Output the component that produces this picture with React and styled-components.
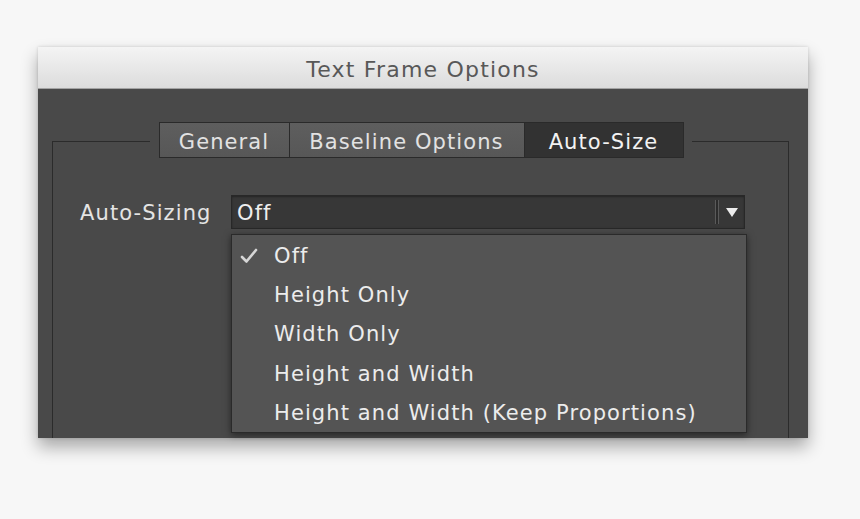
import React from 'react';
import styled, { createGlobalStyle } from 'styled-components';

const GlobalStyle = createGlobalStyle`
  html, body {
    margin: 0;
    padding: 0;
    background: #f7f7f7;
  }
  body {
    font-family: "DejaVu Sans", "Liberation Sans", sans-serif;
  }
`;

const Page = styled.div`
  height: 519px;
  box-sizing: border-box;
  padding: 47px 0 0 38px;
`;

const Window = styled.div`
  width: 770px;
  height: 391px;
  display: flex;
  flex-direction: column;
  box-shadow: 0 9px 16px rgba(0, 0, 0, 0.32), 0 0 3px rgba(0, 0, 0, 0.15);
`;

const TitleBar = styled.div`
  height: 42px;
  box-sizing: border-box;
  padding-top: 3px;
  border-bottom: 1px solid #a3a3a3;
  background: linear-gradient(#f4f4f4, #dcdcdc);
  display: flex;
  align-items: center;
  justify-content: center;
  font-size: 22px;
  letter-spacing: 1.2px;
  color: #585858;
`;

const Body = styled.div`
  flex: 1;
  background: #494949;
  padding: 33px 0 0 14px;
  display: flex;
  flex-direction: column;
  font-size: 21px;
  letter-spacing: 1.1px;
  color: #e8e8e8;
`;

const GroupBox = styled.div`
  width: 737px;
  flex: 1;
  display: flex;
  flex-direction: column;
`;

const Header = styled.div`
  display: flex;
  align-items: flex-start;
  height: 36px;
`;

const Rule = styled.div`
  flex: 1;
  margin-top: 19px;
  height: 17px;
  border-top: 1px solid #2b2b2b;
  border-${(p) => p.$side}: 1px solid #2b2b2b;
  margin-${(p) => (p.$side === 'left' ? 'right' : 'left')}: ${(p) => (p.$side === 'left' ? 9 : 8)}px;
`;

const Tabs = styled.div`
  display: flex;
  height: 36px;
`;

const Tab = styled.div`
  width: ${(p) => p.$w}px;
  height: 36px;
  box-sizing: border-box;
  padding-top: 3px;
  border: 1px solid #2a2a2a;
  margin-left: -1px;
  &:first-child {
    margin-left: 0;
  }
  display: flex;
  align-items: center;
  justify-content: center;
  background: ${(p) => (p.$active ? '#323232' : 'linear-gradient(#5e5e5e, #575757)')};
  color: ${(p) => (p.$active ? '#f2f2f2' : '#e2e2e2')};
`;

const GroupBody = styled.div`
  flex: 1;
  border-left: 1px solid #2b2b2b;
  border-right: 1px solid #2b2b2b;
  padding: 37px 0 0 27px;
`;

const FieldRow = styled.div`
  display: flex;
  align-items: center;
  height: 34px;
`;

const Label = styled.div`
  width: 151px;
  padding-top: 2px;
  color: #e4e4e4;
`;

const SelectWrap = styled.div`
  position: relative;
  width: 514px;
  height: 34px;
`;

const SelectBox = styled.div`
  height: 100%;
  box-sizing: border-box;
  background: #373737;
  border: 1px solid #282828;
  box-shadow: inset 0 1px 2px rgba(0, 0, 0, 0.35);
  display: flex;
  align-items: center;
  padding: 0 6px 0 5px;
  color: #eeeeee;
`;

const SelectText = styled.span`
  padding-top: 2px;
`;

const ArrowArea = styled.div`
  margin-left: auto;
  display: flex;
  align-items: center;
  gap: 7px;
`;

const Separator = styled.div`
  width: 2px;
  height: 24px;
  border-left: 1px solid #5a5a5a;
  border-right: 1px solid #5a5a5a;
  background: #2c2c2c;
`;

const Triangle = styled.div`
  width: 0;
  height: 0;
  border-left: 6px solid transparent;
  border-right: 6px solid transparent;
  border-top: 9px solid #ececec;
`;

const Menu = styled.div`
  position: absolute;
  top: calc(100% + 5px);
  left: 0;
  width: 516px;
  box-sizing: border-box;
  background: #545454;
  border: 1px solid #2a2a2a;
  box-shadow: 0 2px 7px rgba(0, 0, 0, 0.5);
  z-index: 5;
`;

const MenuItem = styled.div`
  height: 39.4px;
  box-sizing: border-box;
  padding: 2px 0 0 8px;
  display: flex;
  align-items: center;
  color: #ececec;
`;

const CheckSlot = styled.div`
  width: 34px;
  display: flex;
  align-items: center;
`;

const Check = () => (
  <svg width="18" height="16" viewBox="0 0 18 16">
    <path d="M2 9 L6.5 13.5 L16 2" fill="none" stroke="#d6d6d6" strokeWidth="2.6" strokeLinecap="round" strokeLinejoin="round" />
  </svg>
);

const options = ['Off', 'Height Only', 'Width Only', 'Height and Width', 'Height and Width (Keep Proportions)'];

export default function App() {
  return (
    <Page>
      <GlobalStyle />
      <Window>
        <TitleBar>Text Frame Options</TitleBar>
        <Body>
          <GroupBox>
            <Header>
              <Rule $side="left" />
              <Tabs>
                <Tab $w={131}>General</Tab>
                <Tab $w={236}>Baseline Options</Tab>
                <Tab $w={160} $active>Auto-Size</Tab>
              </Tabs>
              <Rule $side="right" />
            </Header>
            <GroupBody>
              <FieldRow>
                <Label>Auto-Sizing</Label>
                <SelectWrap>
                  <SelectBox>
                    <SelectText>Off</SelectText>
                    <ArrowArea>
                      <Separator />
                      <Triangle />
                    </ArrowArea>
                  </SelectBox>
                  <Menu>
                    {options.map((o, i) => (
                      <MenuItem key={o}>
                        <CheckSlot>{i === 0 && <Check />}</CheckSlot>
                        {o}
                      </MenuItem>
                    ))}
                  </Menu>
                </SelectWrap>
              </FieldRow>
            </GroupBody>
          </GroupBox>
        </Body>
      </Window>
    </Page>
  );
}
